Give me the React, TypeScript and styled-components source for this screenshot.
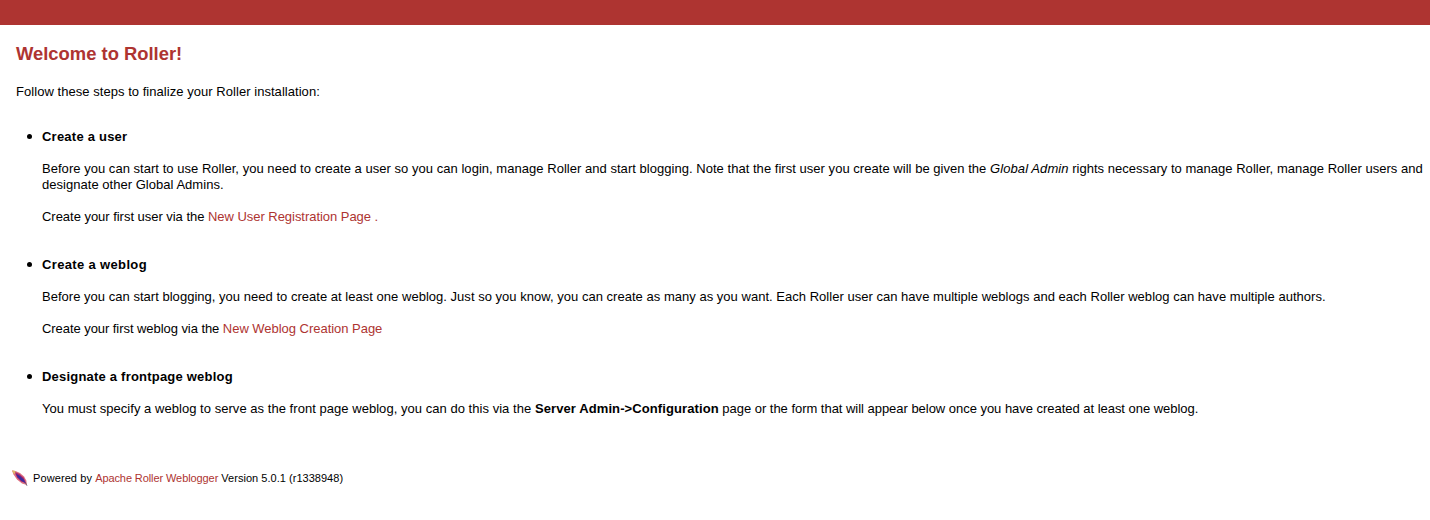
import React from "react";
import styled, { createGlobalStyle } from "styled-components";

const GlobalStyle = createGlobalStyle`
  html, body { margin: 0; padding: 0; background: #fff; }
  body { font: 13px/16px "Liberation Sans", Arial, sans-serif; color: #000; }
`;

const Banner = styled.header`
  height: 25px;
  background: #ae3431;
`;

const Content = styled.main`
  padding: 18px 5px 0 16px;
`;

const Title = styled.h1`
  margin: 0;
  font-size: 18.4px;
  line-height: 22px;
  font-weight: bold;
  color: #ae3431;
`;

const Text = styled.p<{ $track?: number }>`
  margin: 0;
  letter-spacing: ${(p) => p.$track ?? 0}px;
`;

const Run = styled.span<{ $track?: number }>`
  letter-spacing: ${(p) => p.$track ?? 0}px;
`;

const Intro = styled(Text)`
  margin-top: 19px;
`;

const Steps = styled.ul`
  display: flex;
  flex-direction: column;
  gap: 32px;
  margin: 29px 0 0;
  padding: 0;
  list-style: none;
`;

const Step = styled.li`
  display: grid;
  grid-template-columns: 26px 1fr;
`;

const Bullet = styled.span`
  width: 5px;
  height: 5px;
  margin: 5px 0 0 11px;
  border-radius: 50%;
  background: #000;
`;

const StepBody = styled.div`
  display: flex;
  flex-direction: column;
  gap: 16px;
`;

const StepTitle = styled.h2<{ $track?: number }>`
  margin: 0;
  font-size: 13px;
  line-height: 16px;
  letter-spacing: ${(p) => p.$track ?? 0}px;
`;

const Line = styled.span`
  display: block;
  white-space: nowrap;
`;

const Link = styled.a<{ $track?: number }>`
  color: #ae3431;
  text-decoration: none;
  letter-spacing: ${(p) => p.$track ?? 0}px;
`;

const Footer = styled.footer`
  display: flex;
  align-items: center;
  gap: 5px;
  padding: 53px 0 0 12px;
  font-size: 11px;
  line-height: 16px;
`;

const Feather = () => (
  <svg width="16" height="16" viewBox="0 0 16 16" aria-hidden="true">
    <path d="M0 .5 3.5 1 8 3 12 6.5 14.3 10.5 15 15 10 13.5 5 9.5 1.5 4.5Z" fill="#dd6f80" />
    <path d="M2.5 1.8 7 3.8 11.5 7.5 14 13 9.5 11.8 5 7.5Z" fill="#a62a6c" />
    <path d="M4 3.8 8 6 11.5 9.3 13.8 13.3 9.5 11 5.5 7Z" fill="#3a2ba0" />
    <path d="M0 .3 3.3 1.1 3.3 3.3 1.8 4Z" fill="#e0b866" />
    <path d="m13.3 12.5 1.7 3.3" stroke="#55506a" strokeWidth=".8" />
  </svg>
);

export default function App() {
  return (
    <>
      <GlobalStyle />
      <Banner />
      <Content>
        <Title>Welcome to Roller!</Title>
        <Intro $track={0.045}>Follow these steps to finalize your Roller installation:</Intro>
        <Steps>
          <Step>
            <Bullet />
            <StepBody>
              <StepTitle $track={0.23}>Create a user</StepTitle>
              <Text as="div">
                <Line>
                  <Run $track={0.034}>
                    Before you can start to use Roller, you need to create a user so you can login, manage
                    Roller and start blogging. Note that the first user you create will be given the{" "}
                  </Run>
                  <Run as="em" $track={0.08}>Global Admin</Run>
                  <Run $track={0.026}> rights necessary to manage Roller, manage Roller users and</Run>
                </Line>
                <Line>
                  <Run $track={0.03}>designate other Global Admins.</Run>
                </Line>
              </Text>
              <Text>
                <Run $track={-0.03}>Create your first user via the </Run>
                <Link $track={-0.04}>New User Registration Page .</Link>
              </Text>
            </StepBody>
          </Step>
          <Step>
            <Bullet />
            <StepBody>
              <StepTitle $track={0.35}>Create a weblog</StepTitle>
              <Text $track={0.024}>
                Before you can start blogging, you need to create at least one weblog. Just so you know, you
                can create as many as you want. Each Roller user can have multiple weblogs and each Roller
                weblog can have multiple authors.
              </Text>
              <Text>
                <Run $track={-0.06}>Create your first weblog via the </Run>
                <Link $track={-0.03}>New Weblog Creation Page</Link>
              </Text>
            </StepBody>
          </Step>
          <Step>
            <Bullet />
            <StepBody>
              <StepTitle $track={0.21}>Designate a frontpage weblog</StepTitle>
              <Text>
                <Run $track={0.04}>
                  You must specify a weblog to serve as the front page weblog, you can do this via the{" "}
                </Run>
                <Run as="strong" $track={0.1}>Server Admin-&gt;Configuration</Run>
                <Run $track={-0.03}>
                  {" "}page or the form that will appear below once you have created at least one weblog.
                </Run>
              </Text>
            </StepBody>
          </Step>
        </Steps>
      </Content>
      <Footer>
        <Feather />
        <span>
          <Run $track={0.09}>Powered by </Run>
          <Link $track={-0.09}>Apache Roller Weblogger</Link>
          <Run $track={0.03}> Version 5.0.1 (r1338948)</Run>
        </span>
      </Footer>
    </>
  );
}
